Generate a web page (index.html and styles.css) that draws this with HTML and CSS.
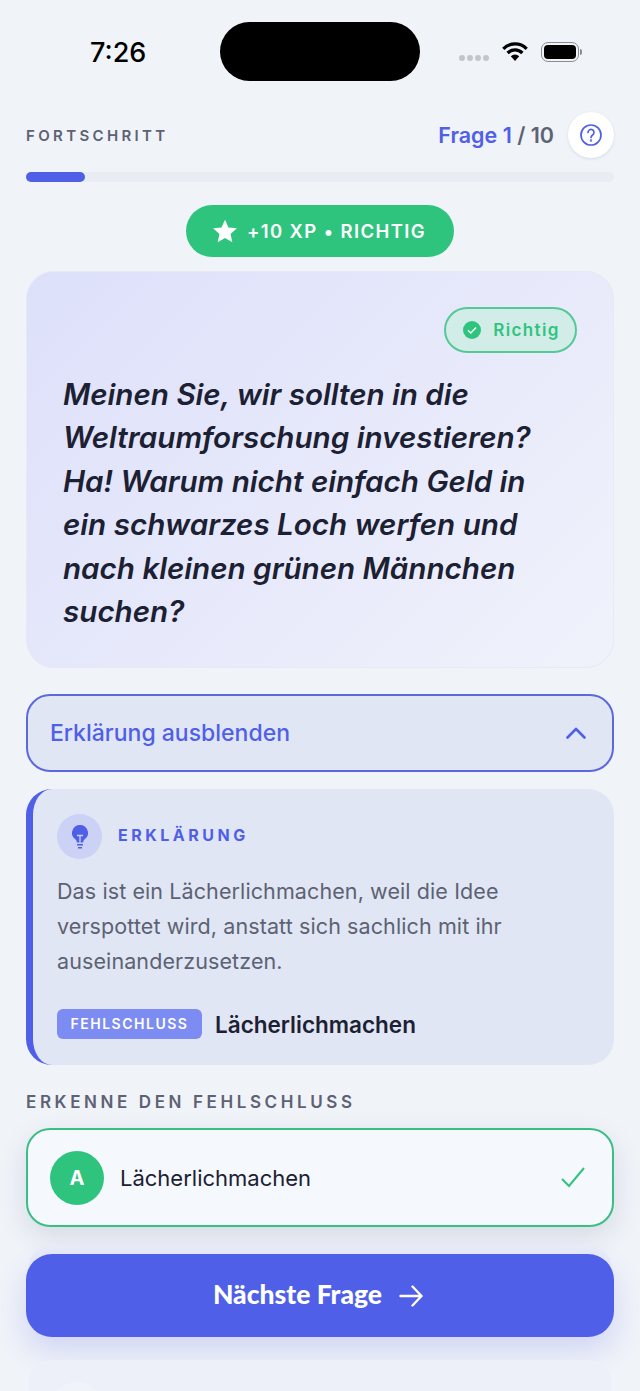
FILE: index.html
```html
<!DOCTYPE html>
<html lang="de">

<head>
    <meta charset="UTF-8">
    <meta name="viewport" content="width=device-width, initial-scale=1.0">
    <title>Fehlschluss Quiz</title>
    <link rel="stylesheet" href="styles.css">
</head>

<body>
    <div class="status-bar">
        <span class="time">7:26</span>
        <div class="island"></div>
        <div class="status-icons">
            <div class="signal"><i></i><i></i><i></i><i></i></div>
            <svg class="wifi" width="26" height="20" viewBox="0 0 26 20">
                <path d="M1.300 6.800a16.500 16.500 0 0 1 23.400 0M5.600 11a10.500 10.500 0 0 1 14.800 0" fill="none" stroke="#000" stroke-width="3.200" />
                <path d="M8.800 14.200a6 6 0 0 1 8.400 0L13 19z" fill="#000" />
            </svg>
            <div class="battery"><div class="battery-level"></div></div>
            <div class="battery-cap"></div>
        </div>
    </div>

    <main class="page">
        <div class="progress-head">
            <span class="progress-label">FORTSCHRITT</span>
            <div class="progress-right">
                <span class="counter"><b>Frage 1</b> / 10</span>
                <button class="help-btn">
                    <svg width="24" height="24" viewBox="0 0 24 24" fill="none" stroke="#4f5fe8" stroke-width="1.700" stroke-linecap="round">
                        <circle cx="12" cy="12" r="10" />
                        <path d="M9 9.500a3 3 0 1 1 4.600 2.500c-1 .7-1.600 1.300-1.600 2.500" />
                        <circle cx="12" cy="17.500" r=".4" />
                    </svg>
                </button>
            </div>
        </div>
        <div class="progress-track"><div class="progress-fill" style="width: 10%"></div></div>

        <div class="xp-row">
            <div class="xp-pill">
                <svg width="26" height="26" viewBox="0 0 24 24" fill="#fff">
                    <path d="M12 1.500l3.200 7.200 7.800.8-5.900 5.200 1.700 7.700-6.800-4-6.800 4 1.700-7.700L1 9.500l7.800-.8z" />
                </svg>
                <span>+10 XP • RICHTIG</span>
            </div>
        </div>

        <section class="quote-card">
            <div class="badge-row">
                <div class="badge-correct">
                    <svg width="18" height="18" viewBox="0 0 18 18">
                        <circle cx="9" cy="9" r="9" fill="#2ec47e" />
                        <path d="M5 9.300l2.800 2.800L13 6.500" fill="none" stroke="#fff" stroke-width="1.400" />
                    </svg>
                    <span>Richtig</span>
                </div>
            </div>
            <p class="quote">Meinen Sie, wir sollten in die Weltraumforschung investieren? Ha! Warum nicht einfach Geld in ein schwarzes Loch werfen und nach kleinen grünen Männchen suchen?</p>
        </section>

        <button class="toggle">
            <span>Erklärung ausblenden</span>
            <svg width="20" height="12" viewBox="0 0 20 12" fill="none" stroke="#4f5fe8" stroke-width="2.600" stroke-linecap="round" stroke-linejoin="round">
                <path d="M1.500 10.500L10 2l8.500 8.500" />
            </svg>
        </button>

        <section class="explain">
            <div class="explain-head">
                <div class="bulb">
                    <svg width="16" height="24" viewBox="0 0 16 24">
                        <path d="M8 0a8 8 0 0 1 4.500 14.600c-.9.7-1.200 1.400-1.300 2.900H4.800c-.1-1.500-.4-2.200-1.300-2.900A8 8 0 0 1 8 0z" fill="#4f5fe8" />
                        <path d="M5 10.500h6M8 10.500v7" fill="none" stroke="#cdd3f5" stroke-width="1.300" />
                        <path d="M5 19.700h6M6 22.700h4" fill="none" stroke="#4f5fe8" stroke-width="1.600" />
                    </svg>
                </div>
                <span class="explain-title">ERKLÄRUNG</span>
            </div>
            <p class="explain-text">Das ist ein Lächerlichmachen, weil die Idee verspottet wird, anstatt sich sachlich mit ihr auseinanderzusetzen.</p>
            <div class="fallacy-row">
                <span class="fallacy-tag">FEHLSCHLUSS</span>
                <span class="fallacy-name">Lächerlichmachen</span>
            </div>
        </section>

        <h2 class="section-label">ERKENNE DEN FEHLSCHLUSS</h2>

        <div class="option">
            <div class="option-letter">A</div>
            <span class="option-text">Lächerlichmachen</span>
            <svg width="24" height="21" viewBox="0 0 24 21" fill="none" stroke="#2ec47e" stroke-width="2">
                <path d="M1 12l7 7L23 1" />
            </svg>
        </div>

        <div class="next-wrap">
            <button class="next-btn">
                <span>Nächste Frage</span>
                <svg width="24" height="24" viewBox="0 0 24 24" fill="none" stroke="#fff" stroke-width="2.400" stroke-linecap="round" stroke-linejoin="round">
                    <path d="M1.500 12h21M13.500 2.500l9 9.500-9 9.500" />
                </svg>
            </button>
        </div>

        <div class="option-ghost"><div class="ghost-letter"></div></div>
    </main>
</body>

</html>
```

FILE: styles.css
```css
* {
    margin: 0;
    padding: 0;
    box-sizing: border-box;
}

html,
body {
    height: 1391px;
    overflow: hidden;
}

body {
    font-family: 'Inter', 'Liberation Sans', sans-serif;
    background: #f0f3f8;
    color: #1c2033;
}

button {
    font-family: inherit;
    border: none;
}

.status-bar {
    height: 112px;
    padding-top: 22px;
    position: relative;
    display: flex;
    align-items: flex-start;
}

.time {
    margin: 15px 0 0 90px;
    font-size: 27px;
    line-height: 32px;
    font-weight: 500;
    color: #000;
}

.island {
    position: absolute;
    left: 220px;
    top: 22px;
    width: 200px;
    height: 59px;
    border-radius: 30px;
    background: #000;
}

.status-icons {
    position: absolute;
    left: 459px;
    top: 42px;
    display: flex;
    align-items: center;
}

.signal {
    display: flex;
    gap: 2px;
    margin-top: 11px;
}

.signal i {
    width: 6px;
    height: 6px;
    border-radius: 50%;
    background: #c4c5c9;
}

.wifi {
    margin-left: 13px;
}

.battery {
    width: 38px;
    height: 20px;
    margin-left: 13px;
    padding: 2px;
    border: 1.500px solid #8a8b8f;
    border-radius: 7px;
}

.battery-level {
    height: 100%;
    border-radius: 4px;
    background: #000;
}

.battery-cap {
    width: 2px;
    height: 6px;
    margin-left: 1px;
    border-radius: 0 2px 2px 0;
    background: #8a8b8f;
}

.page {
    padding: 0 26px;
}

.progress-head {
    height: 46px;
    display: flex;
    justify-content: space-between;
    align-items: center;
}

.progress-label {
    font-size: 15px;
    font-weight: 600;
    letter-spacing: 3.350px;
    color: #5c6273;
}

.progress-right {
    display: flex;
    align-items: center;
    gap: 14px;
}

.counter {
    font-size: 21.500px;
    font-weight: 600;
    color: #5c6273;
}

.counter b {
    font-weight: 600;
    color: #4f5fe8;
}

.help-btn {
    width: 46px;
    height: 46px;
    border-radius: 50%;
    background: #fff;
    box-shadow: 0 1px 3px rgba(30, 40, 90, 0.12);
    display: flex;
    align-items: center;
    justify-content: center;
}

.progress-track {
    height: 10px;
    margin-top: 14px;
    border-radius: 5px;
    background: #e9ecf3;
}

.progress-fill {
    height: 100%;
    border-radius: 5px;
    background: #4f5fe8;
}

.xp-row {
    margin-top: 23px;
    display: flex;
    justify-content: center;
}

.xp-pill {
    width: 268px;
    height: 52px;
    padding-right: 2px;
    border-radius: 26px;
    background: #2ec47e;
    display: flex;
    align-items: center;
    justify-content: center;
    gap: 9px;
    color: #fff;
    font-size: 18.500px;
    font-weight: 600;
    letter-spacing: 1.400px;
}

.quote-card {
    height: 397px;
    margin-top: 14px;
    padding: 35px 36px 0;
    border-radius: 28px;
    border: 1px solid #e7e9f3;
    background: linear-gradient(135deg, #dde0fa, #f0f2fb);
}

.badge-row {
    display: flex;
    justify-content: flex-end;
}

.badge-correct {
    width: 133px;
    height: 46px;
    padding-left: 2px;
    border-radius: 23px;
    border: 2px solid #54c995;
    background: #d2ece8;
    display: flex;
    align-items: center;
    justify-content: center;
    gap: 12px;
    color: #2ec47e;
    font-size: 17px;
    font-weight: 600;
    letter-spacing: 1.350px;
}

.quote {
    margin-top: 20px;
    padding-right: 16px;
    font-size: 29.600px;
    line-height: 43.400px;
    font-style: italic;
    font-weight: 600;
    color: #1c2033;
}

.toggle {
    width: 100%;
    height: 78px;
    margin-top: 26px;
    padding: 0 26px 0 22px;
    border: 2px solid #5a69dd;
    border-radius: 24px;
    background: #e1e6f4;
    display: flex;
    align-items: center;
    justify-content: space-between;
    color: #4f5fe8;
    font-size: 23px;
    font-weight: 500;
}

.explain {
    height: 276px;
    margin-top: 17px;
    padding: 25px 24px 0;
    border-left: 7px solid #4f5fe8;
    border-radius: 26px;
    background: #e1e6f4;
}

.explain-head {
    display: flex;
    align-items: center;
    gap: 16px;
}

.bulb {
    width: 45px;
    height: 45px;
    border-radius: 50%;
    background: #ccd2f5;
    display: flex;
    align-items: center;
    justify-content: center;
}

.explain-title {
    margin-top: -3px;
    font-size: 16px;
    font-weight: 700;
    letter-spacing: 3.500px;
    color: #4f5fe8;
}

.explain-text {
    margin-top: 15px;
    font-size: 21.500px;
    line-height: 35px;
    letter-spacing: 0.100px;
    color: #5c6273;
}

.fallacy-row {
    margin-top: 30px;
    display: flex;
    align-items: center;
    gap: 13px;
}

.fallacy-tag {
    width: 145px;
    height: 30px;
    border-radius: 6px;
    background: #7d8cf2;
    color: #fff;
    font-size: 14px;
    line-height: 30px;
    font-weight: 600;
    letter-spacing: 1.500px;
    text-align: center;
}

.fallacy-name {
    font-size: 22.500px;
    font-weight: 600;
}

.section-label {
    margin-top: 27px;
    font-size: 17px;
    line-height: 20px;
    font-weight: 600;
    letter-spacing: 3.600px;
    color: #5c6273;
}

.option {
    height: 99px;
    margin-top: 16px;
    padding: 0 27px 0 22px;
    border: 2px solid #3abf82;
    border-radius: 24px;
    background: #f5f8fc;
    box-shadow: 0 10px 28px rgba(30, 40, 90, 0.12);
    display: flex;
    align-items: center;
    gap: 16px;
}

.option-letter {
    width: 54px;
    height: 54px;
    border-radius: 50%;
    background: #2ec47e;
    color: #fff;
    font-size: 20px;
    font-weight: 700;
    line-height: 54px;
    text-align: center;
}

.option-text {
    flex: 1;
    font-size: 22px;
}

/* lighter panel peeking out above the button */
.next-wrap {
    margin-top: 27px;
    position: relative;
}

.next-wrap::before {
    content: '';
    position: absolute;
    top: -9px;
    left: 2px;
    right: 2px;
    height: 50px;
    border-radius: 24px;
    background: #e9ecf7;
}

.next-btn {
    position: relative;
    width: 100%;
    height: 83px;
    padding-right: 4px;
    border-radius: 26px;
    background: #4f5fe8;
    box-shadow: 0 14px 30px rgba(79, 95, 232, 0.2);
    display: flex;
    align-items: center;
    justify-content: center;
    gap: 17px;
    color: #fff;
    font-family: 'Lato', sans-serif;
    font-size: 26.500px;
    font-weight: 900;
}

.next-btn span {
    margin-top: -3px;
}

.option-ghost {
    position: relative;
    height: 90px;
    margin: 23px 2px 0;
    padding: 22px 0 0 22px;
    border-radius: 24px;
    background: #edeff9;
}

.ghost-letter {
    width: 54px;
    height: 54px;
    border-radius: 50%;
    background: #f1f3fa;
}
```
